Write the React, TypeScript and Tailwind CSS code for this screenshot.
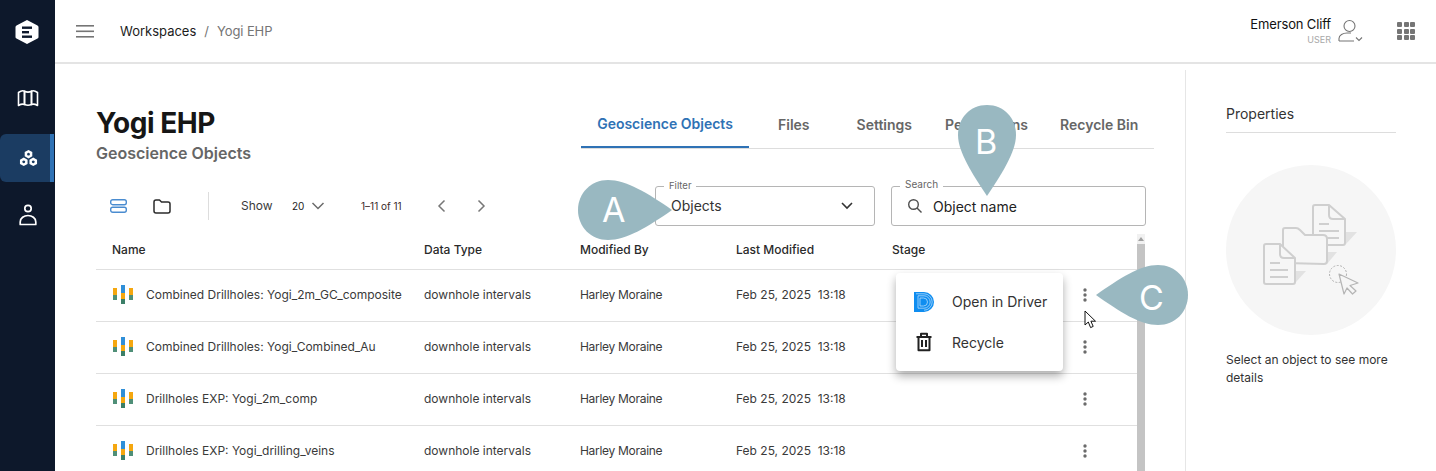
import React from "react";

function DrillIcon() {
  return (
    <svg width="22" height="20" viewBox="0 0 22 20" className="shrink-0">
      <rect x="1" y="4" width="4" height="7" fill="#f5a70f" />
      <rect x="1" y="11" width="4" height="5" fill="#4f8f78" />
      <rect x="9" y="1" width="4" height="8" fill="#2f8fd8" />
      <rect x="9" y="9" width="4" height="6" fill="#f5a70f" />
      <rect x="9" y="15" width="4" height="5" fill="#3c7f68" />
      <rect x="17" y="4" width="4" height="7" fill="#f5a70f" />
      <rect x="17" y="11" width="4" height="5" fill="#4f8f78" />
    </svg>
  );
}

function Dots() {
  return (
    <svg width="4" height="14" viewBox="0 0 4 14" fill="#6b6b6b">
      <circle cx="2" cy="2" r="1.7" />
      <circle cx="2" cy="7" r="1.7" />
      <circle cx="2" cy="12" r="1.7" />
    </svg>
  );
}

function Row({ name }: { name: string }) {
  return (
    <div className="flex items-center h-[52px] pb-[2px] border-b border-[#e0e0e0] text-[12px] text-[#3a3a3a]">
      <div className="w-[312px] pl-[16px] flex items-center gap-[12px]">
        <span className="relative -top-[1px]"><DrillIcon /></span>
        <span className="whitespace-nowrap">{name}</span>
      </div>
      <div className="w-[156px] pl-[16px]">downhole intervals</div>
      <div className="w-[156px] pl-[16px] tracking-[-0.3px]">Harley Moraine</div>
      <div className="w-[156px] pl-[16px] whitespace-nowrap">Feb 25, 2025&nbsp;&nbsp;13:18</div>
      <div className="flex-1 flex justify-end pr-[58px]"><Dots /></div>
    </div>
  );
}

function Tab({ label, active, cls }: { label: string; active?: boolean; cls: string }) {
  return (
    <div
      className={
        "h-[47px] flex items-center text-[14px] font-semibold whitespace-nowrap " +
        (active ? "text-[#2f72b5] border-b-2 border-[#2f72b5] " : "text-[#666666] ") +
        cls
      }
    >
      {label}
    </div>
  );
}

export default function App() {
  return (
    <div className="relative flex w-[1436px] h-[471px] overflow-hidden bg-white [font-family:Inter,sans-serif]">
      {/* Sidebar */}
      <aside className="w-[55px] h-full bg-[#0d182b] flex flex-col shrink-0">
        <div className="h-[63px] flex items-center justify-center pr-[1px]">
          <svg width="24" height="26" viewBox="0 0 24 26">
            <path d="M12 1 L22.5 6.5 Q23.5 7 23.5 8 V18 Q23.5 19 22.5 19.5 L12 25 L1.5 19.5 Q0.5 19 0.5 18 V8 Q0.5 7 1.5 6.5 Z" fill="#fff" />
            <rect x="7" y="7.5" width="10" height="2.4" fill="#0d182b" />
            <rect x="7" y="12" width="7" height="2.4" fill="#0d182b" />
            <rect x="7" y="16.5" width="10" height="2.4" fill="#0d182b" />
          </svg>
        </div>
        <div className="h-[71px] flex items-center justify-center pl-[1px] pb-[1px]">
          <svg width="22" height="18" viewBox="0 0 22 18" fill="none" stroke="#fff" strokeWidth="1.6" strokeLinejoin="round">
            <path d="M1.5 3.5 Q5 1 7.5 2.2 V15.5 Q5 14.5 1.5 16.5 Z" />
            <path d="M7.5 2.2 Q11 4 14.5 2.2 V15.5 Q11 17 7.5 15.5 Z" />
            <path d="M14.5 2.2 Q17 1 20.5 3.5 V16.5 Q17 14.5 14.5 15.5 Z" />
          </svg>
        </div>
        <div className="h-[48px] w-[54px] bg-[#1b3c62] rounded-l-[6px] border-r-[4px] border-[#2f72b5] flex items-center justify-center pl-[6px]">
          <svg width="19" height="18" viewBox="0 0 20 18" fill="#fff">
            <path fillRule="evenodd" d="M10 0.5 L14 2.8 V7.2 L10 9.5 L6 7.2 V2.8 Z M10 3.5 a1.5 1.5 0 1 0 .01 0 Z" />
            <path fillRule="evenodd" d="M5 8.5 L9 10.8 V15.2 L5 17.5 L1 15.2 V10.8 Z M5 11.5 a1.5 1.5 0 1 0 .01 0 Z" />
            <path fillRule="evenodd" d="M15 8.5 L19 10.8 V15.2 L15 17.5 L11 15.2 V10.8 Z M15 11.5 a1.5 1.5 0 1 0 .01 0 Z" />
          </svg>
        </div>
        <div className="h-[66px] flex items-center justify-center pl-[1px]">
          <svg width="18" height="22" viewBox="0 0 18 22" fill="none" stroke="#fff" strokeWidth="1.7">
            <circle cx="9" cy="4.5" r="3.2" />
            <path d="M1.2 20.5 V18 C1.2 14 5 11.5 9 11.5 C13 11.5 16.8 14 16.8 18 V20.5 Z" strokeLinejoin="round" />
          </svg>
        </div>
      </aside>

      <div className="flex-1 flex flex-col min-w-0">
        {/* Header */}
        <header className="h-[64px] border-b-2 border-[#e4e4e4] flex items-center shrink-0">
          <svg width="18" height="13" viewBox="0 0 18 13" className="ml-[21px]" fill="#757575">
            <rect y="0" width="18" height="1.6" />
            <rect y="5.5" width="18" height="1.6" />
            <rect y="11" width="18" height="1.6" />
          </svg>
          <div className="ml-[26px] pt-[1px] text-[13px] flex items-center">
            <span className="text-[#1c1c1c]">Workspaces</span>
            <span className="text-[#757575] mx-[8px]">/</span>
            <span className="text-[#757575] tracking-[-0.1px]">Yogi EHP</span>
          </div>
          <div className="ml-auto flex items-center">
            <div className="flex flex-col items-end mr-[7px]">
              <span className="text-[13px] leading-[16px] text-[#111111] tracking-[-0.15px]">Emerson Cliff</span>
              <span className="text-[9px] leading-[12px] text-[#a8a8a8] mt-[2px]">USER</span>
            </div>
            <svg width="26" height="26" viewBox="0 0 26 26" fill="none" stroke="#757575" strokeWidth="1.1" className="mr-[33px]">
              <circle cx="11.5" cy="8" r="5.5" />
              <path d="M1 23 V20.5 C1 17 5 15 9 15 H13 M1 23 H16" />
              <path d="M18 19.5 L21 22.5 L24 19.5" />
            </svg>
            <div className="grid grid-cols-3 gap-[1.5px] mr-[21px]">
              {Array.from({ length: 9 }).map((_, i) => (
                <span key={i} className="w-[5px] h-[5px] rounded-[1px] bg-[#757575]" />
              ))}
            </div>
          </div>
        </header>

        <div className="flex-1 flex min-h-0">
          {/* Main */}
          <main className="w-[1130px] shrink-0 pl-[41px] pr-[31px] overflow-hidden">
            <div className="flex h-[122px]">
              <div className="w-[485px] pt-[43px]">
                <h1 className="text-[28px] leading-[32px] font-bold text-[#161616] tracking-[-0.45px]">Yogi EHP</h1>
                <p className="text-[16px] leading-[22px] mt-[3px] font-semibold text-[#666666]">Geoscience Objects</p>
              </div>
              <div className="flex-1 pt-[37px]">
                <div className="flex items-end h-[48px] border-b border-[#dddddd]">
                  <Tab label="Geoscience Objects" active cls="w-[168px] justify-center" />
                  <Tab label="Files" cls="ml-[29px]" />
                  <Tab label="Settings" cls="ml-[47px]" />
                  <Tab label="Permissions" cls="ml-[33px]" />
                  <Tab label="Recycle Bin" cls="ml-[32px]" />
                </div>
              </div>
            </div>

            {/* Toolbar */}
            <div className="flex items-center h-[40px]">
              <div className="w-[559px] flex items-center">
                <div className="w-[44px] flex justify-center">
                  <svg width="17" height="14" viewBox="0 0 17 14" fill="none" stroke="#4a8cd0" strokeWidth="1.4" className="ml-[1px]">
                    <rect x="0.7" y="0.7" width="15.6" height="5" rx="2" />
                    <rect x="0.7" y="8.3" width="15.6" height="5" rx="2" />
                  </svg>
                </div>
                <div className="w-[44px] flex justify-center">
                  <svg width="18" height="15" viewBox="0 0 18 15" fill="none" stroke="#2b2b2b" strokeWidth="1.5" strokeLinejoin="round">
                    <path d="M1 3 Q1 1 3 1 H6.5 L8.5 3 H15 Q17 3 17 5 V12 Q17 14 15 14 H3 Q1 14 1 12 Z" />
                  </svg>
                </div>
                <div className="w-px h-[28px] bg-[#dddddd] ml-[24px]" />
                <span className="ml-[32px] text-[12px] text-[#3a3a3a] w-[50px]">Show</span>
                <span className="text-[10px] text-[#222222] ml-[1px] w-[14px]">20</span>
                <svg width="14" height="8" viewBox="0 0 14 8" fill="none" stroke="#6b6b6b" strokeWidth="1.5" className="ml-[5px]">
                  <path d="M1.5 1 L7 6.5 L12.5 1" />
                </svg>
                <span className="ml-[36px] text-[10px] text-[#3a2a2a] w-[45px] whitespace-nowrap">1–11 of 11</span>
                <svg width="9" height="14" viewBox="0 0 9 14" fill="none" stroke="#777777" strokeWidth="1.5" className="ml-[31px]">
                  <path d="M7.5 1.5 L2 7 L7.5 12.5" />
                </svg>
                <svg width="9" height="14" viewBox="0 0 9 14" fill="none" stroke="#777777" strokeWidth="1.5" className="ml-[31px]">
                  <path d="M1.5 1.5 L7 7 L1.5 12.5" />
                </svg>
              </div>

              {/* Filter */}
              <div className="relative w-[220px] h-[40px] rounded-[3px] border border-[#b5b5b5] flex items-center pl-[15px] pr-[21px]">
                <span className="absolute -top-[7px] left-[8px] bg-white px-[5px] text-[9.5px] leading-[11px] text-[#666666]">Filter</span>
                <span className="text-[14px] text-[#333333] pb-[2px]">Objects</span>
                <svg width="12" height="8" viewBox="0 0 12 8" fill="none" stroke="#333333" strokeWidth="1.6" className="ml-auto">
                  <path d="M1 1 L6 6 L11 1" />
                </svg>
              </div>
              {/* Search */}
              <div className="relative ml-[16px] w-[255px] h-[40px] rounded-[3px] border border-[#b5b5b5] flex items-center pl-[15px]">
                <span className="absolute -top-[9px] left-[8px] bg-white px-[5px] text-[10px] leading-[12px] text-[#666666]">Search</span>
                <svg width="16" height="16" viewBox="0 0 16 16" fill="none" stroke="#4f4f4f" strokeWidth="1.4">
                  <circle cx="6.5" cy="6.5" r="4.8" />
                  <path d="M10 10 L14.5 14.5" />
                </svg>
                <span className="ml-[10px] text-[14px] text-[#222222]">Object name</span>
              </div>
            </div>

            {/* Table */}
            <div className="relative mt-[4px] w-[1049px]">
              <div className="flex items-center h-[40px] pt-[1px] border-b border-[#e0e0e0] text-[12px] font-medium text-[#2a2a2a]">
                <div className="w-[312px] pl-[16px]">Name</div>
                <div className="w-[156px] pl-[16px]">Data Type</div>
                <div className="w-[156px] pl-[16px]">Modified By</div>
                <div className="w-[156px] pl-[16px]">Last Modified</div>
                <div className="pl-[16px]">Stage</div>
              </div>
              <Row name="Combined Drillholes: Yogi_2m_GC_composite" />
              <Row name="Combined Drillholes: Yogi_Combined_Au" />
              <Row name="Drillholes EXP: Yogi_2m_comp" />
              <Row name="Drillholes EXP: Yogi_drilling_veins" />

              {/* Scrollbar */}
              <div className="absolute right-0 top-[4px] bottom-0 w-[8px] bg-[#c4c4c4]">
                <div className="h-[10px] bg-[#f1f1f1] flex items-center justify-center">
                  <span className="w-0 h-0 border-x-[3px] border-x-transparent border-b-[4px] border-b-[#a0a0a0]" />
                </div>
              </div>

              {/* Menu */}
              <div className="absolute left-[800px] top-[43px] w-[167px] h-[98px] bg-white rounded-[4px] shadow-[0_5px_10px_rgba(0,0,0,0.32)] text-[14px] text-[#333333] flex flex-col py-[9px]">
                <div className="h-[40px] flex items-center pl-[18px]">
                  <svg width="20" height="20" viewBox="0 0 20 20" fill="none">
                    <path d="M0 0 H10 A10 10 0 0 1 10 20 H0 Z" fill="#0f8df0" />
                    <g stroke="#b5dcfb" strokeWidth="0.8">
                      <path d="M6 6 V14 H9.5 A4 4 0 0 0 9.5 6 Z" />
                      <path d="M4 3.8 H10 A6.2 6.2 0 0 1 10 16.2 H4 Z" />
                      <path d="M2 1.8 H10 A8.2 8.2 0 0 1 10 18.2" />
                    </g>
                  </svg>
                  <span className="ml-[18px]">Open in Driver</span>
                </div>
                <div className="h-[41px] flex items-center pl-[18px] pt-[1px]">
                  <svg width="20" height="20" viewBox="0 0 20 20" fill="none" stroke="#222222" strokeWidth="2" strokeLinejoin="round">
                    <path d="M2.5 5 H17.5 M7 4.5 V1.8 H13 V4.5 M4.5 5 V18.2 H15.5 V5 M8 8 V15 M12 8 V15" />
                  </svg>
                  <span className="ml-[18px]">Recycle</span>
                </div>
              </div>

              {/* Cursor */}
              <svg width="14" height="20" viewBox="0 0 14 20" className="absolute left-[988px] top-[80px]">
                <path d="M1 1 V15 L4.3 12 L6.6 17.6 L9.2 16.4 L6.9 11.2 H11.5 Z" fill="#fff" stroke="#111" strokeWidth="1" strokeLinejoin="round" />
              </svg>
            </div>
          </main>

          {/* Properties */}
          <aside className="flex-1 min-w-0 mt-[6px] border-l border-[#e6e6e6] pl-[40px] pr-[40px] pt-[34px]">
            <div className="text-[14px] leading-[20px] text-[#333333] pb-[8px] border-b border-[#dddddd]">Properties</div>
            <div className="mt-[32px] w-[170px] h-[170px] rounded-full bg-[#f6f6f6] flex items-center justify-center">
              <svg width="96" height="92" viewBox="0 0 96 92" fill="none" stroke="#cfcfcf" strokeWidth="2" strokeLinejoin="round">
                <path d="M83 28 H94 L83 40 Z" fill="#e2e2e2" stroke="none" />
                <path d="M52 1 H66 L82 15 V39 Q82 41 80 41 H52 Q50 41 50 39 V3 Q50 1 52 1 Z" fill="#f6f6f6" />
                <path d="M66 1 V11 Q66 15 70 15 H82" />
                <path d="M56 20 H66 M56 27 H76 M56 34 H76" />
                <path d="M64 48 H74 L64 60 Z" fill="#e2e2e2" stroke="none" />
                <path d="M20 26 Q20 24 22 24 H33 Q35 24 37 26 L42 31 H60 Q64 31 64 35 V57 Q64 60 61 60 L23 59 Q20 59 20 56 Z" fill="#f6f6f6" />
                <path d="M33 67 H43 L33 78 Z" fill="#e2e2e2" stroke="none" />
                <path d="M3 40 H17 L32 54 V78 Q32 80 30 80 H3 Q1 80 1 78 V42 Q1 40 3 40 Z" fill="#f6f6f6" />
                <path d="M17 40 V50 Q17 54 21 54 H32" />
                <path d="M7 59 H17 M7 66 H25 M7 73 H25" />
                <circle cx="75" cy="70" r="8.5" strokeDasharray="2 1.5" stroke="#a9a9a9" strokeWidth="0.9" />
                <path d="M76 70 L95 79 L87 81.5 L93 87 L89.5 90 L84 84 L81 90 Z" fill="#f6f6f6" stroke="#b5b5b5" strokeWidth="1.2" />
              </svg>
            </div>
            <p className="mt-[16px] text-[12px] leading-[18px] text-[#333333]">Select an object to see more details</p>
          </aside>
        </div>
      </div>

      {/* Callouts lying over the page */}
      <div className="absolute left-[578px] top-[180px] pointer-events-none">
        <svg width="96" height="60" viewBox="0 0 96 60">
          <path d="M0 30 C0 13 13 0 30 0 C48 0 70 13 94 30 C70 47 48 60 30 60 C13 60 0 47 0 30 Z" fill="#99b8c1" />
        </svg>
        <span className="absolute left-[24px] top-[10px] text-[34px] leading-[40px] text-white">A</span>
      </div>
      <div className="absolute left-[957px] top-[105px] pointer-events-none">
        <svg width="60" height="92" viewBox="0 0 60 92">
          <path d="M30 0 C47 0 59 13 59 30 C59 47 44 70 30 91 C16 70 1 47 1 30 C1 13 13 0 30 0 Z" fill="#99b8c1" />
        </svg>
        <span className="absolute left-[18px] top-[17px] text-[34px] leading-[40px] text-white">B</span>
      </div>
      <div className="absolute left-[1096px] top-[265px] pointer-events-none">
        <svg width="92" height="60" viewBox="0 0 92 60">
          <path d="M92 30 C92 13 79 0 62 0 C44 0 24 13 0 30 C24 47 44 60 62 60 C79 60 92 47 92 30 Z" fill="#99b8c1" />
        </svg>
        <span className="absolute left-[43px] top-[13px] text-[34px] leading-[40px] text-white">C</span>
      </div>
    </div>
  );
}
